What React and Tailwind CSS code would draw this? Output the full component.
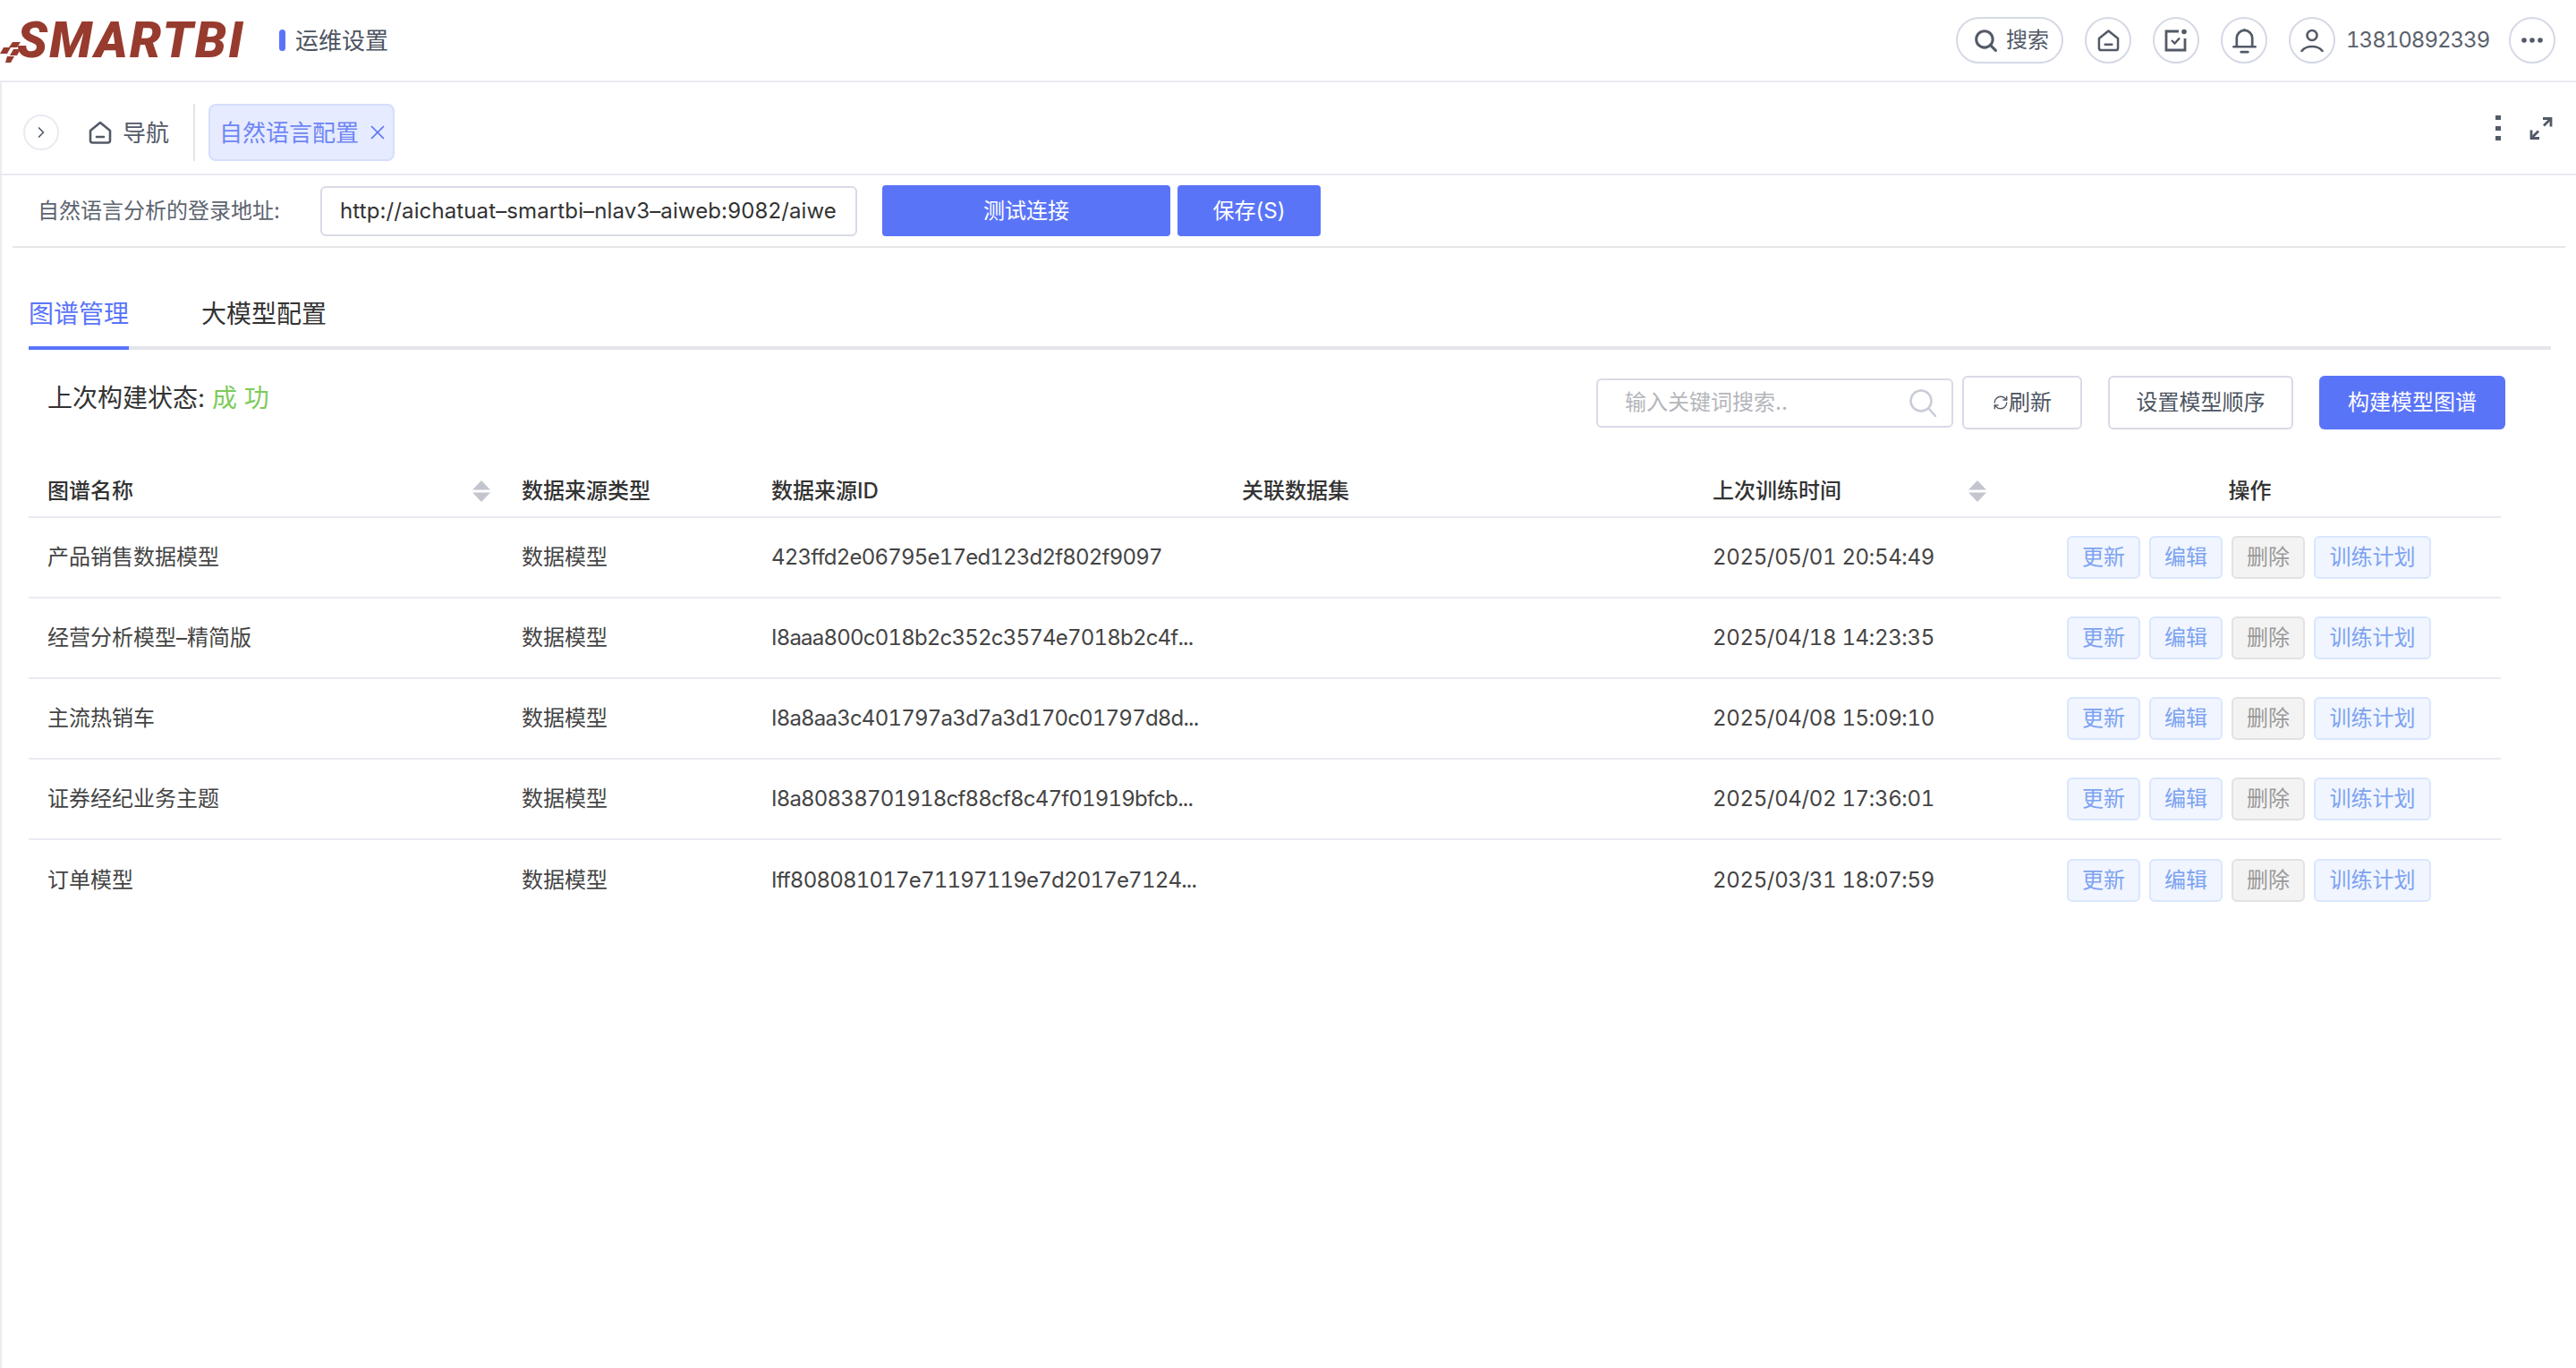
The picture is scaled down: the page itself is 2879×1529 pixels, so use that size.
import React from 'react'
import { ChevronRight, X, RefreshCw } from 'lucide-react'

const rows = [
  { name: '产品销售数据模型', id: '423ffd2e06795e17ed123d2f802f9097', time: '2025/05/01 20:54:49' },
  { name: '经营分析模型–精简版', id: 'I8aaa800c018b2c352c3574e7018b2c4f...', time: '2025/04/18 14:23:35' },
  { name: '主流热销车', id: 'I8a8aa3c401797a3d7a3d170c01797d8d...', time: '2025/04/08 15:09:10' },
  { name: '证券经纪业务主题', id: 'I8a80838701918cf88cf8c47f01919bfcb...', time: '2025/04/02 17:36:01' },
  { name: '订单模型', id: 'Iff808081017e71197119e7d2017e7124...', time: '2025/03/31 18:07:59' },
]

const gridCols = 'grid grid-cols-[530px_279px_526px_526px_347px_1fr]'
const outlineBtn = 'h-[60px] rounded-[6px] border-2 border-[#d8dae6] bg-white text-[24px] text-[#4c5461] flex items-center justify-center'

const HomeIcon = ({ className }) => (
  <svg viewBox="0 0 26 26" className={className} fill="none" stroke="#535a67" strokeWidth="2.6" strokeLinejoin="round">
    <path d="M2 11 13 2l11 9v11a2.5 2.5 0 0 1-2.500 2.500h-17A2.500 2.500 0 0 1 2 22Z" />
    <path d="M9 18h8" strokeLinecap="round" />
  </svg>
)

const SortIcon = () => (
  <svg viewBox="0 0 20 24" className="w-[20px] h-[24px]" fill="#c3c6cf">
    <path d="M10 0 20 10.500H0Z" />
    <path d="M0 13.500h20L10 24Z" />
  </svg>
)

const Circle = ({ children }) => (
  <div className="w-[52px] h-[52px] rounded-full border-2 border-[#d6d9e6] flex items-center justify-center shrink-0">{children}</div>
)

const Logo = () => (
  <div className="w-[270px] h-[52px] flex items-center relative shrink-0">
    <svg viewBox="0 0 30 28" className="absolute left-0 top-[28px] w-[30px] h-[28px]" fill="#973b2f">
      <path d="M14 0h9l-4 6h-9Z" />
      <path d="M4 6h8l-4 7H0Z" />
      <path d="M15 8h8l-4 7h-8Z" />
      <path d="M8 16h8l-4 7H6Z" />
    </svg>
    <span className="ml-[19px] text-[56px] leading-none font-black italic tracking-[2.3px] text-[#973b2f] font-['Roboto',sans-serif]">SMARTBI</span>
  </div>
)

const ActionBtn = ({ label, muted, wide }) => (
  <button
    className={`h-[48px] rounded-[6px] border-2 text-[24px] flex items-center justify-center ${wide ? 'w-[131px]' : 'w-[82px]'} ${
      muted ? 'bg-[#f3f3f3] border-[#e2e2e2] text-[#999]' : 'bg-[#f0f5ff] border-[#d9e6fd] text-[#7ea3f0]'
    }`}
  >
    {label}
  </button>
)

export default function App() {
  return (
    <div className="w-[2879px] h-[1529px] bg-white overflow-hidden text-[#333] font-['Inter','Noto_Sans_CJK_SC',sans-serif]">
      <header className="h-[92px] border-b-2 border-[#e9ebf1] flex items-center">
        <Logo />
        <div className="ml-[42px] w-[7px] h-[24px] rounded-full bg-[#5a74f8]" />
        <span className="ml-[11px] text-[26px] text-[#4c5461]">运维设置</span>
        <div className="ml-auto mr-[23px] flex items-center text-[#535a67]">
          <div className="w-[120px] h-[52px] rounded-full border-2 border-[#d6d9e6] flex items-center pl-[18px]">
            <svg viewBox="0 0 24 24" className="w-[26px] h-[26px]" fill="none" stroke="#535a67" strokeWidth="2.800" strokeLinecap="round">
              <circle cx="11" cy="11" r="8.500" />
              <path d="m17 17 5.500 5.500" />
            </svg>
            <span className="ml-[10px] text-[24px]">搜索</span>
          </div>
          <div className="ml-[24px] flex items-center gap-[24px]">
            <Circle><HomeIcon className="w-[25px] h-[26px]" /></Circle>
            <Circle>
              <svg viewBox="0 0 26 26" className="w-[26px] h-[26px]" fill="none" stroke="#535a67" strokeWidth="2.800">
                <path d="M16 3H2v21h21V11" />
                <path d="m8 13 3.500 3.500L17 10.500" strokeWidth="2.400" />
                <circle cx="22" cy="3.500" r="2.800" fill="#535a67" stroke="none" />
              </svg>
            </Circle>
            <Circle>
              <svg viewBox="0 0 28 30" className="w-[27px] h-[29px]" fill="none" stroke="#535a67" strokeWidth="2.800" strokeLinecap="round">
                <path d="M5 21V12a9 9 0 0 1 18 0v9" />
                <path d="M1.500 22h25" />
                <path d="M10 28h8" />
                <circle cx="14" cy="2.500" r="1.500" fill="#535a67" stroke="none" />
              </svg>
            </Circle>
            <Circle>
              <svg viewBox="0 0 26 26" className="w-[26px] h-[26px]" fill="none" stroke="#535a67" strokeWidth="2.600" strokeLinecap="round">
                <circle cx="13" cy="7.500" r="5.500" />
                <path d="M1.500 25c3-4 7-5 11.500-5s8.500 1 11.500 5" />
              </svg>
            </Circle>
          </div>
          <span className="ml-[12px] w-[170px] text-[24px] tabular-nums tracking-[-1px] text-[#5a616d]">13810892339</span>
          <div className="ml-[12px]">
            <Circle>
              <svg viewBox="0 0 24 6" className="w-[24px] h-[6px]" fill="#535a67">
                <circle cx="3" cy="3" r="2.800" />
                <circle cx="12" cy="3" r="2.800" />
                <circle cx="21" cy="3" r="2.800" />
              </svg>
            </Circle>
          </div>
        </div>
      </header>

      <div className="h-[1437px] border-l-2 border-[#e9ebf1]">
        <div className="h-[104px] border-b-2 border-[#e9ebf1] flex items-center pt-[10px] pl-[24px] pr-[26px]">
          <div className="w-[40px] h-[40px] rounded-full border-2 border-[#e9ebf1] flex items-center justify-center">
            <ChevronRight size={20} strokeWidth={2} className="text-[#535a67]" />
          </div>
          <HomeIcon className="ml-[33px] w-[26px] h-[26px]" />
          <span className="ml-[12px] text-[26px] text-[#535a67]">导航</span>
          <div className="ml-[27px] w-[2px] h-[64px] bg-[#e3e5ec]" />
          <div className="ml-[15px] w-[208px] h-[64px] rounded-[8px] border-2 border-[#d6defb] bg-[#e6ebff] flex items-center pl-[10px] text-[#6f86f5]">
            <span className="text-[26px]">自然语言配置</span>
            <X size={26} strokeWidth={1.6} className="ml-[8px] text-[#5a74f8]" />
          </div>
          <div className="ml-auto -mt-[10px] flex items-center">
            <svg viewBox="0 0 6 28" className="w-[6px] h-[28px]" fill="#535a67">
              <rect y="0" width="6" height="5" />
              <rect y="12" width="6" height="5" />
              <rect y="23" width="6" height="5" />
            </svg>
            <svg viewBox="0 0 26 26" className="ml-[32px] w-[26px] h-[27px]" fill="none" stroke="#535a67" strokeWidth="2.800">
              <path d="M15 2h9v9" />
              <path d="M24 2 16 10" />
              <path d="M2 15v9h9" />
              <path d="M2 24l8-8" />
            </svg>
          </div>
        </div>

        <div className="mx-[12px] h-[81px] border-b-2 border-[#e5e7e6] flex items-center pl-[28px]">
          <span className="w-[316px] text-[24px] text-[#5d6470]">自然语言分析的登录地址:</span>
          <div className="w-[600px] h-[56px] rounded-[6px] border-2 border-[#d8dae6] flex items-center pl-[20px] pr-[20px] overflow-hidden">
            <span className="text-[24px] tracking-[0.12px] text-[#333] whitespace-nowrap">http://aichatuat–smartbi–nlav3–aiweb:9082/aiwe</span>
          </div>
          <button className="ml-[28px] w-[322px] h-[57px] rounded-[4px] bg-[#5a74f8] text-white text-[24px]">测试连接</button>
          <button className="ml-[8px] w-[160px] h-[57px] rounded-[4px] bg-[#5a74f8] text-white text-[24px]">保存(S)</button>
        </div>

        <div className="pl-[30px] pr-[28px]">
          <div className="h-[114px] border-b-4 border-[#e4e5ea] flex items-end">
            <div className="w-[112px] h-[60px] -mb-[4px] border-b-4 border-[#5a74f8] text-[28px] text-[#5a74f8] leading-[40px] text-center">图谱管理</div>
            <div className="ml-[81px] h-[56px] text-[28px] text-[#333] leading-[40px]">大模型配置</div>
          </div>

          <div className="mt-[29px] w-[2768px] flex items-start">
            <div className="ml-[21px] mt-[5px] text-[28px] leading-[40px]">
              上次构建状态: <span className="text-[#7ccb5a]">成 功</span>
            </div>
            <div className="ml-auto flex items-center">
              <div className="w-[399px] h-[55px] rounded-[6px] border-2 border-[#d8dae6] flex items-center justify-between pl-[30px] pr-[16px]">
                <span className="text-[24px] text-[#b4b6bb]">输入关键词搜索..</span>
                <svg viewBox="0 0 32 32" className="w-[32px] h-[32px]" fill="none" stroke="#c9cdd6" strokeWidth="2.600" strokeLinecap="round">
                  <circle cx="14" cy="14" r="11.500" />
                  <path d="m23 23 7 8" />
                </svg>
              </div>
              <button className={`${outlineBtn} ml-[10px] w-[134px]`}>
                <RefreshCw size={18} strokeWidth={1.8} className="text-[#535a67]" />
                <span>刷新</span>
              </button>
              <button className={`${outlineBtn} ml-[29px] w-[207px]`}>设置模型顺序</button>
              <button className="ml-[29px] w-[208px] h-[60px] rounded-[6px] bg-[#5a74f8] text-white text-[24px]">构建模型图谱</button>
            </div>
          </div>

          <div className="mt-[41px] w-[2763px]">
            <div className={`${gridCols} h-[58px] border-b-2 border-[#e9ebf1] items-center text-[24px] font-medium text-[#333]`}>
              <div className="pl-[21px] pr-[14px] flex items-center justify-between">图谱名称<SortIcon /></div>
              <div className="pl-[21px]">数据来源类型</div>
              <div className="pl-[21px]">数据来源ID</div>
              <div className="pl-[21px]">关联数据集</div>
              <div className="pl-[21px] pr-[20px] flex items-center justify-between">上次训练时间<SortIcon /></div>
              <div className="pr-[6px] text-center">操作</div>
            </div>
            {rows.map((row, idx) => (
              <div key={row.name} className={`${gridCols} h-[90px] items-center text-[24px] text-[#444] ${idx < rows.length - 1 ? 'border-b-2 border-[#e9ebf1]' : ''}`}>
                <div className="pl-[21px]">{row.name}</div>
                <div className="pl-[21px]">数据模型</div>
                <div className="pl-[21px] whitespace-nowrap tabular-nums tracking-[-0.8px]">{row.id}</div>
                <div />
                <div className="pl-[21px] tabular-nums tracking-[-0.35px]">{row.time}</div>
                <div className="pl-[70px] flex items-center gap-[10px]">
                  <ActionBtn label="更新" />
                  <ActionBtn label="编辑" />
                  <ActionBtn label="删除" muted />
                  <ActionBtn label="训练计划" wide />
                </div>
              </div>
            ))}
          </div>
        </div>
      </div>
    </div>
  )
}
